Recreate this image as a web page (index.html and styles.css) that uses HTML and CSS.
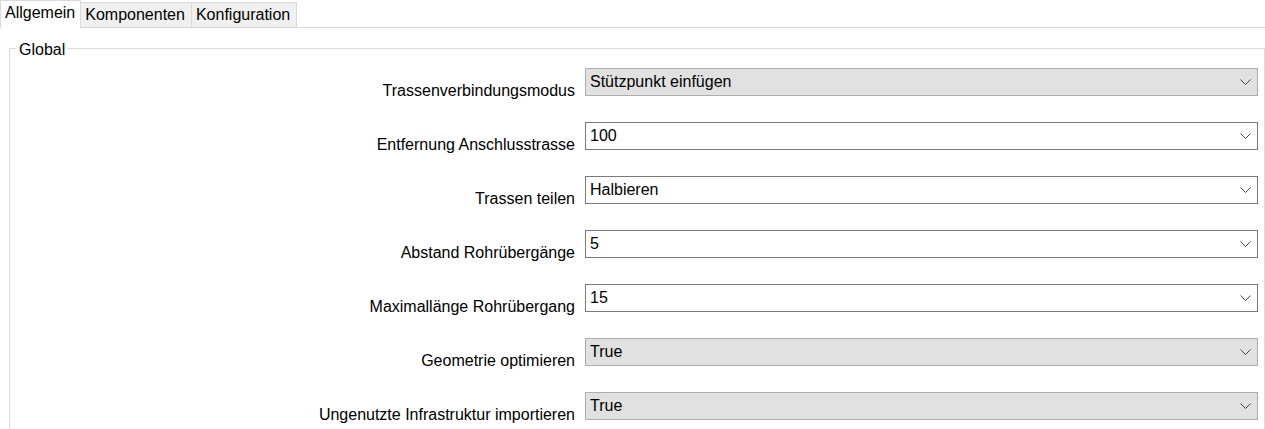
FILE: index.html
```html
<!DOCTYPE html>
<html lang="de">
<head>
    <meta charset="UTF-8">
    <meta name="viewport" content="width=device-width, initial-scale=1.0">
    <title>Einstellungen</title>
    <link rel="stylesheet" href="styles.css">
</head>
<body>
    <!-- Reiter -->
    <div class="tabs">
        <div class="tab active">Allgemein</div>
        <div class="tab">Komponenten</div>
        <div class="tab">Konfiguration</div>
        <div class="tab-fill"></div>
    </div>

    <div class="panel">
        <fieldset class="group">
            <legend>Global</legend>
            <div class="settings">
                <label class="setting-label">Trassenverbindungsmodus</label>
                <div class="combo list">
                    <span>Stützpunkt einfügen</span>
                    <svg class="arrow" width="11" height="6" viewBox="0 0 11 6"><polyline points="0.5,0.5 5.5,5.5 10.5,0.5"/></svg>
                </div>

                <label class="setting-label">Entfernung Anschlusstrasse</label>
                <div class="combo">
                    <span>100</span>
                    <svg class="arrow" width="11" height="6" viewBox="0 0 11 6"><polyline points="0.5,0.5 5.5,5.5 10.5,0.5"/></svg>
                </div>

                <label class="setting-label">Trassen teilen</label>
                <div class="combo">
                    <span>Halbieren</span>
                    <svg class="arrow" width="11" height="6" viewBox="0 0 11 6"><polyline points="0.5,0.5 5.5,5.5 10.5,0.5"/></svg>
                </div>

                <label class="setting-label">Abstand Rohrübergänge</label>
                <div class="combo">
                    <span>5</span>
                    <svg class="arrow" width="11" height="6" viewBox="0 0 11 6"><polyline points="0.5,0.5 5.5,5.5 10.5,0.5"/></svg>
                </div>

                <label class="setting-label">Maximallänge Rohrübergang</label>
                <div class="combo">
                    <span>15</span>
                    <svg class="arrow" width="11" height="6" viewBox="0 0 11 6"><polyline points="0.5,0.5 5.5,5.5 10.5,0.5"/></svg>
                </div>

                <label class="setting-label">Geometrie optimieren</label>
                <div class="combo list">
                    <span>True</span>
                    <svg class="arrow" width="11" height="6" viewBox="0 0 11 6"><polyline points="0.5,0.5 5.5,5.5 10.5,0.5"/></svg>
                </div>

                <label class="setting-label">Ungenutzte Infrastruktur importieren</label>
                <div class="combo list">
                    <span>True</span>
                    <svg class="arrow" width="11" height="6" viewBox="0 0 11 6"><polyline points="0.5,0.5 5.5,5.5 10.5,0.5"/></svg>
                </div>
            </div>
        </fieldset>
    </div>
</body>
</html>
```

FILE: styles.css
```css
body {
    margin: 0;
    font-family: "Liberation Sans", Arial, sans-serif;
    font-size: 16px;
    color: #000;
    background-color: #fff;
    overflow: hidden;
}
.tabs {
    display: flex;
    align-items: flex-end;
    height: 28px;
}
.tab {
    box-sizing: border-box;
    height: 26px;
    padding: 3px 6px 0 4px;
    line-height: 18px;
    background-color: #f0f0f0;
    border-top: 1px solid #d9d9d9;
    border-right: 1px solid #d9d9d9;
    border-bottom: 1px solid #d9d9d9;
    white-space: nowrap;
}
.tab.active {
    height: 28px;
    padding-right: 5px;
    background-color: #fff;
    border-left: 1px solid #d9d9d9;
    border-bottom: none;
}
.tab-fill {
    flex: 1;
    height: 1px;
    background-color: #d9d9d9;
}
.panel {
    padding: 0;
}
.group {
    margin: 10px 0 0 9px;
    padding: 9px 6px 24px 0;
    border: 1px solid #dcdcdc;
    min-width: 0;
}
.group legend {
    margin-left: 6px;
    padding: 3px 3px 0;
    line-height: 18px;
}
.settings {
    display: grid;
    grid-template-columns: 1fr 673px;
    column-gap: 10px;
    row-gap: 26px;
    align-items: end;
}
.setting-label {
    line-height: 18px;
    text-align: right;
    margin-bottom: -4px;
    white-space: nowrap;
}
.combo {
    box-sizing: border-box;
    height: 28px;
    display: flex;
    align-items: center;
    justify-content: space-between;
    padding: 0 6px 0 4px;
    line-height: 18px;
    background-color: #fff;
    border: 1px solid #7a7a7a;
}
.combo.list {
    background-color: #e1e1e1;
    border-color: #adadad;
}
.arrow {
    fill: none;
    stroke: #444;
    stroke-width: 1;
}
```
